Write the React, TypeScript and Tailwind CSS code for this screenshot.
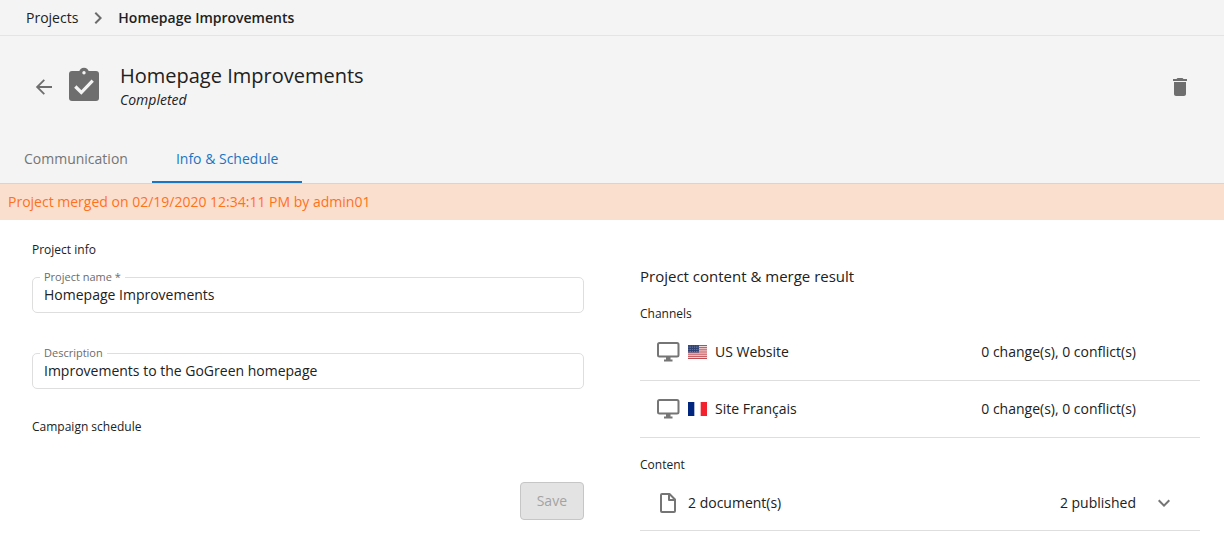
import { useState } from "react";
import { MdChevronRight, MdDelete, MdExpandMore } from "react-icons/md";

const channels = [
  { name: "US Website", flag: "us", changes: 0, conflicts: 0 },
  { name: "Site Français", flag: "fr", changes: 0, conflicts: 0 },
];

function BackIcon() {
  return (
    <svg
      className="size-6"
      viewBox="0 0 24 24"
      fill="none"
      stroke="currentColor"
      strokeWidth="1.8"
      aria-hidden="true"
    >
      <path d="M20 12H5.5M12.3 4.8 5.1 12l7.2 7.2" />
    </svg>
  );
}

function ProjectIcon() {
  return (
    <svg
      className="mb-1 ml-2 size-10 text-[#6e6e6e]"
      viewBox="0 0 40 40"
      aria-hidden="true"
    >
      <rect x="5" y="6" width="30" height="30" rx="3" fill="currentColor" />
      <circle cx="20" cy="7.5" r="4.8" fill="currentColor" />
      <circle cx="20" cy="7.7" r="1.7" fill="#f4f4f4" />
      <path
        d="m11.3 21.5 6 6 11.4-11.9"
        fill="none"
        stroke="#f4f4f4"
        strokeWidth="3.2"
      />
    </svg>
  );
}

function MonitorIcon() {
  return (
    <svg className="size-6 text-[#757575]" viewBox="0 0 24 24" aria-hidden="true">
      <rect
        x="2"
        y="3"
        width="20.5"
        height="13.5"
        rx="1.5"
        fill="none"
        stroke="currentColor"
        strokeWidth="2"
      />
      <path d="M10 17h4.5v2.5h2v2H8v-2h2z" fill="currentColor" />
    </svg>
  );
}

function DocumentIcon() {
  return (
    <svg
      className="size-6 text-[#757575]"
      viewBox="0 0 24 24"
      fill="none"
      stroke="currentColor"
      strokeWidth="2"
      strokeLinejoin="round"
      aria-hidden="true"
    >
      <path d="M6 3h7.5L19 8.5V20a1 1 0 0 1-1 1H6a1 1 0 0 1-1-1V4a1 1 0 0 1 1-1zM13 3v6h6" />
    </svg>
  );
}

function Flag({ code }: { code: string }) {
  if (code === "fr") {
    return (
      <svg width="19" height="14" viewBox="0 0 19 14" aria-hidden="true">
        <rect width="19" height="14" fill="#fff" />
        <rect width="6.33" height="14" fill="#00267f" />
        <rect x="12.67" width="6.33" height="14" fill="#f3202e" />
      </svg>
    );
  }

  return (
    <svg width="19" height="14" viewBox="0 0 19 14" aria-hidden="true">
      <rect width="19" height="14" fill="#f8e4e5" />
      {[0, 2, 4, 6, 8, 10, 12].map((stripe) => (
        <rect
          key={stripe}
          y={(stripe * 14) / 13}
          width="19"
          height={14 / 13}
          fill="#c04a50"
        />
      ))}
      <rect width="11" height="7.54" fill="#2f4273" />
      {[1, 2.8, 4.6, 6.4].map((y) =>
        [1, 2.8, 4.6, 6.4, 8.2, 10].map((x) => (
          <circle key={`${x}-${y}`} cx={x} cy={y} r="0.3" fill="#fff" />
        ))
      )}
    </svg>
  );
}

function TextField({
  id,
  label,
  value,
  onChange,
}: {
  id: string;
  label: string;
  value: string;
  onChange: (value: string) => void;
}) {
  return (
    <div className="relative">
      <label
        htmlFor={id}
        className="absolute left-2 -top-2 bg-white px-1 text-[11px] leading-4 text-[#6b6b6b]"
      >
        {label}
      </label>
      <input
        id={id}
        type="text"
        value={value}
        onChange={(e) => onChange(e.target.value)}
        className="block h-9 w-full rounded-[5px] border border-[#dedede] px-[11px] pb-0.5 text-sm outline-none"
      />
    </div>
  );
}

export default function App() {
  const [name, setName] = useState("Homepage Improvements");
  const [description, setDescription] = useState(
    "Improvements to the GoGreen homepage"
  );

  return (
    <div className="bg-white font-['Open_Sans',sans-serif] text-sm text-[#212121]">
      <header className="border-b border-[#d5d5d5] bg-[#f4f4f4]">
        <nav
          aria-label="Breadcrumb"
          className="flex h-9 items-center gap-2 border-b border-[#e4e4e4] px-[26px]"
        >
          <a href="#projects">Projects</a>
          <MdChevronRight className="size-6 text-[#6b6b6b]" />
          <span className="font-semibold">Homepage Improvements</span>
        </nav>

        <div className="flex items-center px-8 pt-[26px]">
          <button type="button" aria-label="Back" className="text-[#6e6e6e]">
            <BackIcon />
          </button>
          <ProjectIcon />
          <div className="ml-4 flex-1 pt-0.5">
            <h1 className="text-xl leading-6">Homepage Improvements</h1>
            <p className="leading-6 italic">Completed</p>
          </div>
          <button type="button" aria-label="Delete" className="text-[#6e6e6e]">
            <MdDelete className="size-6" />
          </button>
        </div>

        <div role="tablist" className="mt-[23px] flex h-12">
          <button
            type="button"
            role="tab"
            aria-selected="false"
            className="border-b-2 border-transparent px-6 pt-0.5 text-[#757575]"
          >
            Communication
          </button>
          <button
            type="button"
            role="tab"
            aria-selected="true"
            className="border-b-2 border-[#1976c4] px-6 pt-0.5 text-[#1976c4]"
          >
            Info &amp; Schedule
          </button>
        </div>
      </header>

      <div className="flex h-9 items-center bg-[#fbdfce] px-2 text-[#ff711c]">
        Project merged on 02/19/2020 12:34:11 PM by admin01
      </div>

      <main className="grid grid-cols-[69fr_70fr] gap-14 pt-5 pr-6 pb-6 pl-8">
        <form>
          <h2 className="text-xs leading-5">Project info</h2>
          <div className="mt-[17px] flex flex-col gap-10">
            <TextField
              id="project-name"
              label="Project name *"
              value={name}
              onChange={setName}
            />
            <TextField
              id="description"
              label="Description"
              value={description}
              onChange={setDescription}
            />
          </div>
          <h2 className="mt-7 text-xs leading-5">Campaign schedule</h2>
          <div className="mt-[45px] flex justify-end">
            <button
              type="submit"
              disabled
              className="h-[38px] rounded border border-[#c6c6c6] bg-[#e3e3e3] px-4 text-[#a3a3a3]"
            >
              Save
            </button>
          </div>
        </form>

        <section className="pt-6">
          <h2 className="text-[15px] leading-6">
            Project content &amp; merge result
          </h2>

          <h3 className="mt-4 text-xs leading-5">Channels</h3>
          <ul>
            {channels.map((channel) => (
              <li
                key={channel.name}
                className="flex h-[57px] items-center gap-2 border-b border-[#dedede] pr-16 pl-4"
              >
                <MonitorIcon />
                <Flag code={channel.flag} />
                <span className="flex-1">{channel.name}</span>
                <span>
                  {channel.changes} change(s), {channel.conflicts} conflict(s)
                </span>
              </li>
            ))}
          </ul>

          <h3 className="mt-[17px] text-xs leading-5">Content</h3>
          <div className="flex h-14 items-center gap-2 border-b border-[#dedede] pr-6 pl-4">
            <DocumentIcon />
            <span className="flex-1">2 document(s)</span>
            <span>2 published</span>
            <button
              type="button"
              aria-label="Show documents"
              className="ml-2 text-[#757575]"
            >
              <MdExpandMore className="size-6" />
            </button>
          </div>
        </section>
      </main>
    </div>
  );
}
